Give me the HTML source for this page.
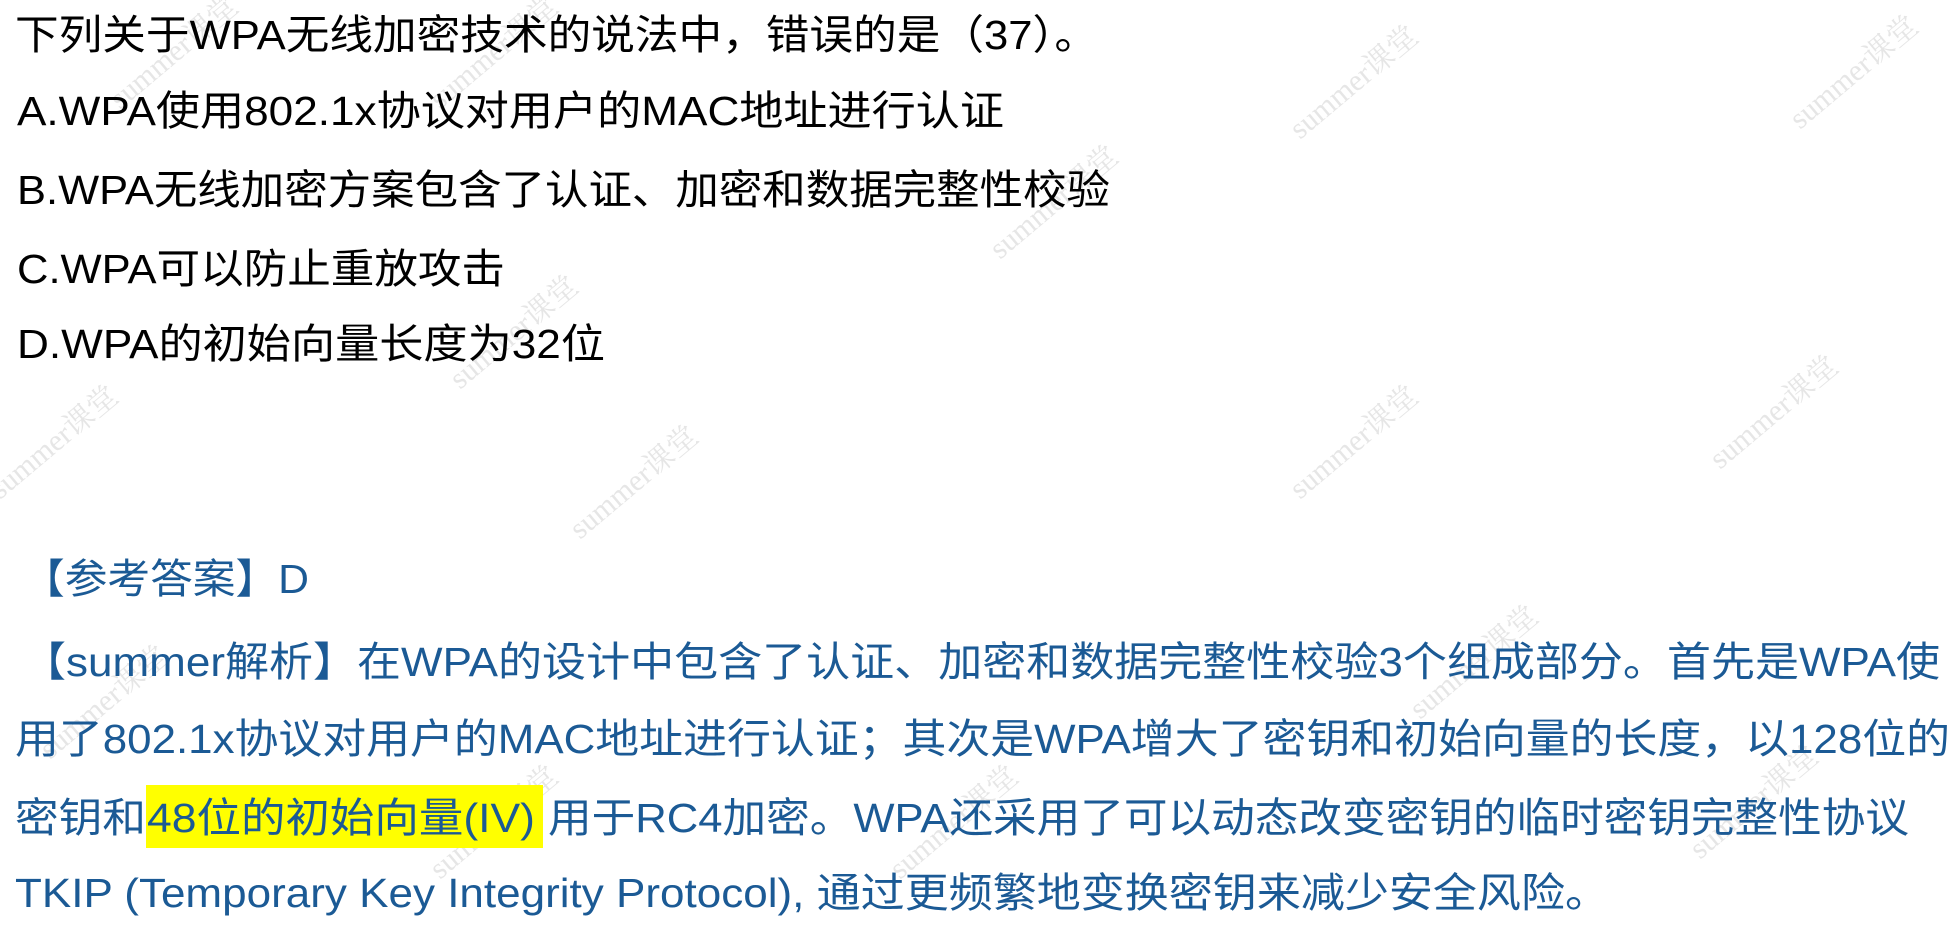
<!DOCTYPE html>
<html><head><meta charset="utf-8"><style>
html,body{margin:0;padding:0;background:#fff;width:1956px;height:936px;overflow:hidden}
svg{display:block}
.k{fill:#000;font-family:"Liberation Sans","Noto Sans CJK SC",sans-serif;font-size:41px}
.b{fill:#1b5a95;font-family:"Liberation Sans","Noto Sans CJK SC",sans-serif;font-size:41px}
.w{fill:#e6e6e6;font-family:"Liberation Serif","Noto Serif CJK SC",serif;font-size:30px}
</style></head><body>
<svg width="1956" height="936" viewBox="0 0 1956 936" xmlns="http://www.w3.org/2000/svg">
<g class="w">
<text transform="translate(120,110) rotate(-40)">summer课堂</text>
<text transform="translate(440,110) rotate(-40)">summer课堂</text>
<text transform="translate(1300,140) rotate(-40)">summer课堂</text>
<text transform="translate(1800,130) rotate(-40)">summer课堂</text>
<text transform="translate(460,390) rotate(-40)">summer课堂</text>
<text transform="translate(1000,260) rotate(-40)">summer课堂</text>
<text transform="translate(0,500) rotate(-40)">summer课堂</text>
<text transform="translate(580,540) rotate(-40)">summer课堂</text>
<text transform="translate(1300,500) rotate(-40)">summer课堂</text>
<text transform="translate(1720,470) rotate(-40)">summer课堂</text>
<text transform="translate(50,760) rotate(-40)">summer课堂</text>
<text transform="translate(440,880) rotate(-40)">summer课堂</text>
<text transform="translate(900,880) rotate(-40)">summer课堂</text>
<text transform="translate(1420,720) rotate(-40)">summer课堂</text>
<text transform="translate(1700,860) rotate(-40)">summer课堂</text>
</g>
<rect x="146" y="785" width="397" height="63" fill="#ffff00"/>
<text class="k" x="15" y="49" textLength="1083" lengthAdjust="spacingAndGlyphs">下列关于WPA无线加密技术的说法中，错误的是（37）。</text>
<text class="k" x="17" y="125" textLength="987" lengthAdjust="spacingAndGlyphs">A.WPA使用802.1x协议对用户的MAC地址进行认证</text>
<text class="k" x="17" y="204" textLength="1093" lengthAdjust="spacingAndGlyphs">B.WPA无线加密方案包含了认证、加密和数据完整性校验</text>
<text class="k" x="17" y="283" textLength="488" lengthAdjust="spacingAndGlyphs">C.WPA可以防止重放攻击</text>
<text class="k" x="17" y="358" textLength="588" lengthAdjust="spacingAndGlyphs">D.WPA的初始向量长度为32位</text>
<text class="b" x="22" y="593" textLength="287" lengthAdjust="spacingAndGlyphs">【参考答案】D</text>
<text class="b" x="22" y="676" textLength="1918" lengthAdjust="spacingAndGlyphs">【summer解析】在WPA的设计中包含了认证、加密和数据完整性校验3个组成部分。首先是WPA使</text>
<text class="b" x="15" y="753" textLength="1935" lengthAdjust="spacingAndGlyphs">用了802.1x协议对用户的MAC地址进行认证；其次是WPA增大了密钥和初始向量的长度，以128位的</text>
<text class="b" x="15" y="832" textLength="131" lengthAdjust="spacingAndGlyphs">密钥和</text>
<text class="b" x="147" y="832" textLength="388" lengthAdjust="spacingAndGlyphs">48位的初始向量(IV)</text>
<text class="b" x="548" y="832" textLength="1361" lengthAdjust="spacingAndGlyphs">用于RC4加密。WPA还采用了可以动态改变密钥的临时密钥完整性协议</text>
<text class="b" x="15" y="907" textLength="1594" lengthAdjust="spacingAndGlyphs">TKIP (Temporary Key Integrity Protocol), 通过更频繁地变换密钥来减少安全风险。</text>
</svg>
</body></html>
